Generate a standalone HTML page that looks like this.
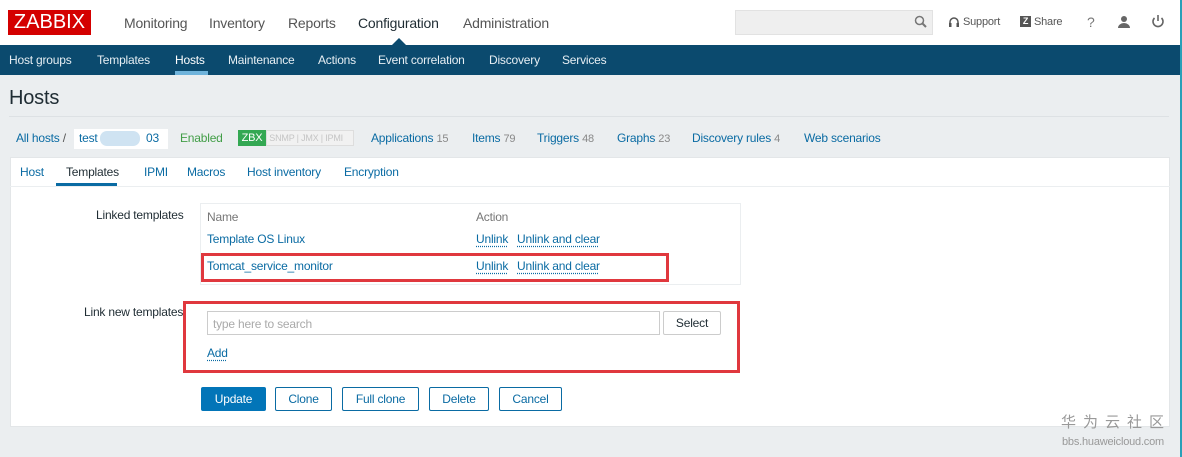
<!DOCTYPE html>
<html><head><meta charset="utf-8"><style>
*{box-sizing:border-box;margin:0;padding:0}
body{width:1182px;height:457px;overflow:hidden;background:#ebeef0;font-family:"Liberation Sans",Arial,sans-serif;font-size:12px;color:#1f2c33;position:relative;letter-spacing:-0.2px}
a{color:#0a6ba3;text-decoration:none}
span,a,div{white-space:nowrap}
.top{position:absolute;left:0;top:0;width:1182px;height:45px;background:#fff}
.logo{position:absolute;left:8px;top:10px;width:83px;height:25px;background:#d40000;color:#fff;font-size:20px;line-height:25px;text-align:center;letter-spacing:0}
.mm{position:absolute;top:15px;font-size:14px;color:#555}
.nav2{position:absolute;left:0;top:45px;width:1182px;height:30px;background:#0b4a6e}
.nav2 span{position:absolute;top:8px;font-size:12px;color:#e6eef3}
.u{text-decoration:underline dotted;text-underline-offset:3px}
.btn{position:absolute;top:387px;height:24px;border:1px solid #0a6ba3;background:#fff;color:#0a6ba3;font-size:12px;line-height:22px;text-align:center;border-radius:2px}
.red{position:absolute;border:3px solid #e0383e}
</style></head><body>
<div class="top">
<div class="logo">ZABBIX</div>
<span class="mm" style="left:124px">Monitoring</span>
<span class="mm" style="left:209px">Inventory</span>
<span class="mm" style="left:288px">Reports</span>
<span class="mm" style="left:358px;color:#1f2c33">Configuration</span>
<span class="mm" style="left:463px">Administration</span>
<div style="position:absolute;left:392px;top:38px;width:0;height:0;border-left:7px solid transparent;border-right:7px solid transparent;border-bottom:7px solid #0b4a6e"></div>
<div style="position:absolute;left:735px;top:10px;width:198px;height:25px;background:#efefef;border:1px solid #e2e2e2"></div>
<svg style="position:absolute;left:914px;top:15px" width="14" height="14"><circle cx="5.5" cy="5.5" r="4" fill="none" stroke="#777" stroke-width="1.5"/><path d="M8.5 8.5L12 12" stroke="#777" stroke-width="2"/></svg>
<svg style="position:absolute;left:948px;top:16px" width="12" height="12"><path d="M2 8V6a4 4 0 0 1 8 0v2" fill="none" stroke="#555" stroke-width="1.5"/><rect x="1" y="7" width="2.5" height="4" fill="#555"/><rect x="8.5" y="7" width="2.5" height="4" fill="#555"/></svg>
<span style="position:absolute;left:963px;top:16px;color:#555;font-size:11px">Support</span>
<div style="position:absolute;left:1020px;top:16px;width:11px;height:11px;background:#555;color:#fff;font-size:9px;line-height:11px;text-align:center;font-weight:bold">Z</div>
<span style="position:absolute;left:1034px;top:16px;color:#555;font-size:11px">Share</span>
<span style="position:absolute;left:1087px;top:14px;color:#777;font-size:14px">?</span>
<svg style="position:absolute;left:1117px;top:15px" width="14" height="14"><circle cx="7" cy="4" r="3" fill="#666"/><path d="M1 13a6 5 0 0 1 12 0z" fill="#666"/></svg>
<svg style="position:absolute;left:1151px;top:14px" width="14" height="14"><path d="M3.5 4a5 5 0 1 0 7 0" fill="none" stroke="#666" stroke-width="1.6"/><path d="M7 1v6" stroke="#666" stroke-width="1.6"/></svg>
</div>
<div class="nav2">
<span style="left:9px">Host groups</span>
<span style="left:97px">Templates</span>
<span style="left:175px;color:#fff">Hosts</span>
<span style="left:228px">Maintenance</span>
<span style="left:318px">Actions</span>
<span style="left:378px">Event correlation</span>
<span style="left:489px">Discovery</span>
<span style="left:562px">Services</span>
<div style="position:absolute;left:175px;top:26px;width:33px;height:4px;background:#6fb3db"></div>
</div>
<div style="position:absolute;left:1180px;top:0;width:2px;height:457px;background:#2aa0b8"></div>
<div style="position:absolute;left:9px;top:87px;font-size:20px;color:#1f2c33">Hosts</div>
<div style="position:absolute;left:9px;top:116px;width:1160px;height:1px;background:#dde1e4"></div>
<div style="position:absolute;left:16px;top:131px;font-size:12px">
<a>All hosts</a> <span style="color:#555">/</span></div>
<div style="position:absolute;left:74px;top:129px;width:94px;height:20px;background:#fff"></div>
<a style="position:absolute;left:79px;top:131px">test</a>
<div style="position:absolute;left:100px;top:131px;width:40px;height:15px;background:#cfe3f2;border-radius:7px"></div>
<a style="position:absolute;left:146px;top:131px">03</a>
<span style="position:absolute;left:180px;top:131px;color:#429e47">Enabled</span>
<div style="position:absolute;left:238px;top:130px;width:28px;height:16px;background:#34a853;color:#fff;font-size:11px;line-height:16px;text-align:center">ZBX</div>
<div style="position:absolute;left:266px;top:130px;width:88px;height:16px;border:1px solid #ddd;color:#c5c5c5;font-size:9px;line-height:14px;background:#f1f1f1;overflow:hidden">&nbsp;SNMP | JMX | IPMI</div>
<span style="position:absolute;left:371px;top:131px"><a>Applications</a> <span style="color:#888;font-size:11px">15</span></span>
<span style="position:absolute;left:472px;top:131px"><a>Items</a> <span style="color:#888;font-size:11px">79</span></span>
<span style="position:absolute;left:537px;top:131px"><a>Triggers</a> <span style="color:#888;font-size:11px">48</span></span>
<span style="position:absolute;left:617px;top:131px"><a>Graphs</a> <span style="color:#888;font-size:11px">23</span></span>
<span style="position:absolute;left:692px;top:131px"><a>Discovery rules</a> <span style="color:#888;font-size:11px">4</span></span>
<a style="position:absolute;left:804px;top:131px">Web scenarios</a>
<div style="position:absolute;left:10px;top:157px;width:1160px;height:270px;background:#fff;border:1px solid #e3e6e8"></div>
<div style="position:absolute;left:10px;top:186px;width:1160px;height:1px;background:#ebeef0"></div>
<a style="position:absolute;left:20px;top:165px">Host</a>
<span style="position:absolute;left:66px;top:165px">Templates</span>
<div style="position:absolute;left:56px;top:183px;width:61px;height:3px;background:#0a6ba3"></div>
<a style="position:absolute;left:144px;top:165px">IPMI</a>
<a style="position:absolute;left:187px;top:165px">Macros</a>
<a style="position:absolute;left:247px;top:165px">Host inventory</a>
<a style="position:absolute;left:344px;top:165px">Encryption</a>
<span style="position:absolute;left:96px;top:208px">Linked templates</span>
<div style="position:absolute;left:200px;top:203px;width:541px;height:82px;border:1px solid #ebeef0"></div>
<span style="position:absolute;left:207px;top:210px;color:#777">Name</span>
<span style="position:absolute;left:476px;top:210px;color:#777">Action</span>
<a style="position:absolute;left:207px;top:232px">Template OS Linux</a>
<a class="u" style="position:absolute;left:476px;top:232px">Unlink</a>
<a class="u" style="position:absolute;left:517px;top:232px">Unlink and clear</a>
<a style="position:absolute;left:207px;top:259px">Tomcat_service_monitor</a>
<a class="u" style="position:absolute;left:476px;top:259px">Unlink</a>
<a class="u" style="position:absolute;left:517px;top:259px">Unlink and clear</a>
<div class="red" style="left:201px;top:253px;width:468px;height:29px"></div>
<span style="position:absolute;left:84px;top:305px">Link new templates</span>
<div style="position:absolute;left:207px;top:311px;width:453px;height:24px;border:1px solid #ccc;color:#aaa;padding:5px 5px;font-size:12px">type here to search</div>
<div style="position:absolute;left:663px;top:311px;width:58px;height:24px;border:1px solid #ccc;line-height:22px;text-align:center;border-radius:2px">Select</div>
<a class="u" style="position:absolute;left:207px;top:346px">Add</a>
<div class="red" style="left:183px;top:301px;width:557px;height:72px"></div>
<div class="btn" style="left:201px;width:65px;background:#0275b8;color:#fff;border-color:#0275b8">Update</div>
<div class="btn" style="left:275px;width:57px">Clone</div>
<div class="btn" style="left:342px;width:77px">Full clone</div>
<div class="btn" style="left:429px;width:60px">Delete</div>
<div class="btn" style="left:499px;width:63px">Cancel</div>
<div style="position:absolute;left:1061px;top:412px;color:#999;font-size:15px;line-height:20px;letter-spacing:7px;font-family:'Noto Sans CJK SC',sans-serif">华为云社区</div>
<div style="position:absolute;left:1062px;top:436px;color:#999;font-size:11px">bbs.huaweicloud.com</div>
</body></html>
